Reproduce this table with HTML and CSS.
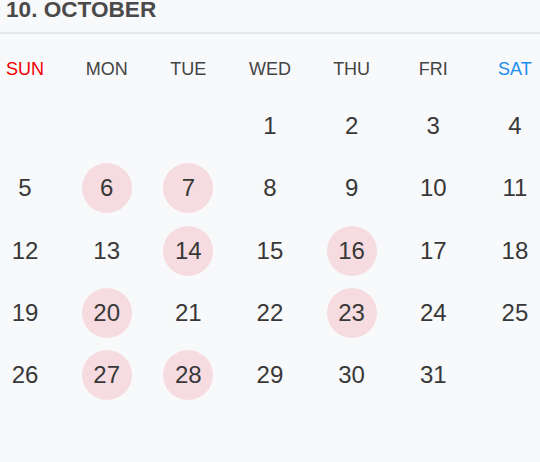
FILE: index.html
```html
<!DOCTYPE html>
<html>
<head>
<meta charset="utf-8">
<link rel="stylesheet" href="styles.css">
</head>
<body>
<div class="cal">
  <div class="title">10. OCTOBER</div>
  <div class="weekdays">
    <div class="wd sun">SUN</div>
    <div class="wd">MON</div>
    <div class="wd">TUE</div>
    <div class="wd">WED</div>
    <div class="wd">THU</div>
    <div class="wd">FRI</div>
    <div class="wd sat">SAT</div>
  </div>
  <div class="days">
    <div class="day first">1</div>
    <div class="day">2</div>
    <div class="day">3</div>
    <div class="day">4</div>
    <div class="day">5</div>
    <div class="day mark">6</div>
    <div class="day mark">7</div>
    <div class="day">8</div>
    <div class="day">9</div>
    <div class="day">10</div>
    <div class="day">11</div>
    <div class="day">12</div>
    <div class="day">13</div>
    <div class="day mark">14</div>
    <div class="day">15</div>
    <div class="day mark">16</div>
    <div class="day">17</div>
    <div class="day">18</div>
    <div class="day">19</div>
    <div class="day mark">20</div>
    <div class="day">21</div>
    <div class="day">22</div>
    <div class="day mark">23</div>
    <div class="day">24</div>
    <div class="day">25</div>
    <div class="day">26</div>
    <div class="day mark">27</div>
    <div class="day mark">28</div>
    <div class="day">29</div>
    <div class="day">30</div>
    <div class="day">31</div>
  </div>
</div>
</body>
</html>
```

FILE: styles.css
```css
html, body {
  margin: 0;
  padding: 0;
  background: #f8f9fa;
}
body {
  width: 540px;
  height: 462px;
  overflow: hidden;
  font-family: "Liberation Sans", Arial, sans-serif;
}
.title {
  font-size: 22.6px;
  font-weight: bold;
  line-height: 19px;
  color: #4a4a4a;
  padding: 0 0 13px 6px;
  border-bottom: 2px solid #e5e7ea;
}
.weekdays, .days {
  display: grid;
  grid-template-columns: repeat(7, 50px);
  justify-content: space-between;
}
.weekdays {
  margin-top: 10px;
}
.wd {
  height: 50px;
  display: flex;
  align-items: center;
  justify-content: center;
  font-size: 18px;
  color: #444;
}
.wd.sun { color: #ee0000; }
.wd.sat { color: #1a8cf0; }
.days {
  margin-top: 7px;
  row-gap: 12.25px;
}
.day {
  height: 50px;
  display: flex;
  align-items: center;
  justify-content: center;
  font-size: 24px;
  color: #383838;
  border-radius: 50%;
}
.day.first { grid-column-start: 4; }
.day.mark { background: #f6dce0; }
```
